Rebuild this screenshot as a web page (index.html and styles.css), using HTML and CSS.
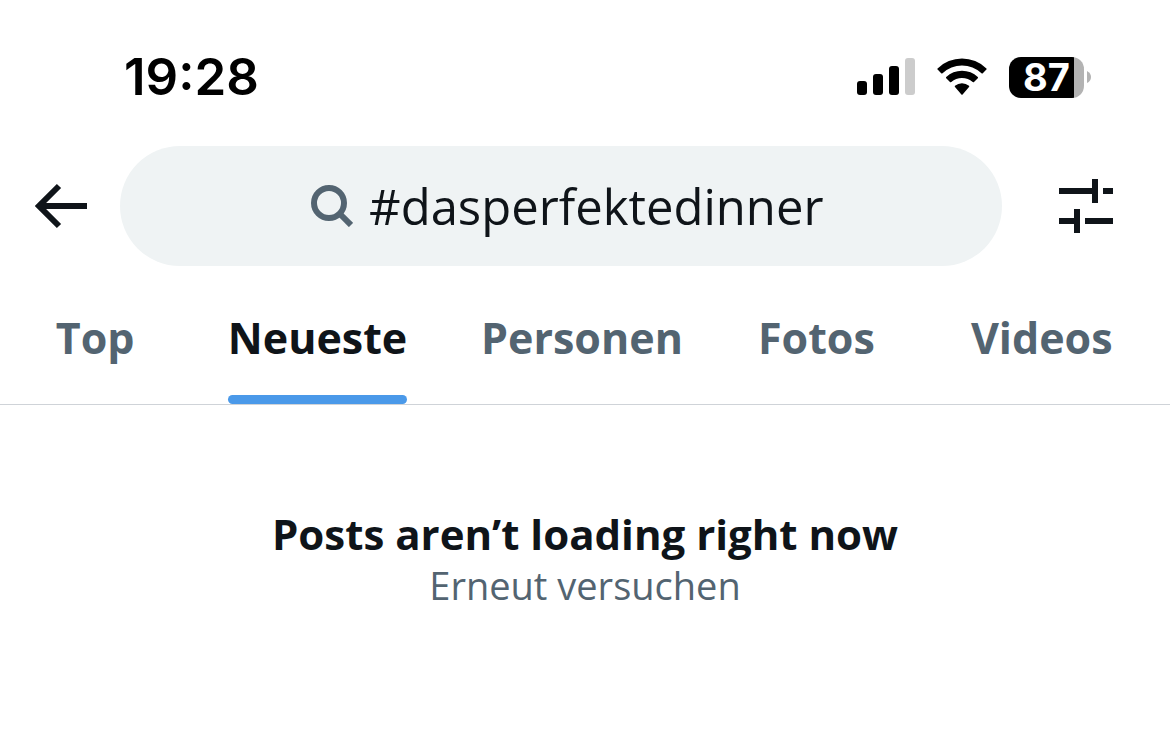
FILE: index.html
```html
<!DOCTYPE html>
<html lang="de">
<head>
<meta charset="utf-8">
<meta name="viewport" content="width=device-width, initial-scale=1">
<title>#dasperfektedinner</title>
<link rel="stylesheet" href="styles.css">
</head>
<body>
<header class="status">
  <time class="clock">19:28</time>
  <div class="indicators">
    <svg class="signal" width="58" height="38" viewBox="0 0 58 38" aria-hidden="true">
      <rect x="0" y="23" width="10" height="14" rx="3"/>
      <rect x="16" y="16" width="10" height="21" rx="3"/>
      <rect x="32" y="8" width="10" height="29" rx="3"/>
      <rect class="faint" x="48" y="0" width="10" height="37" rx="3"/>
    </svg>
    <svg class="wifi" width="50" height="38" viewBox="0 0 50 38" aria-hidden="true">
      <path d="M.6 10.400A35 35 0 0 1 49.400 10.400Q50 11 49.400 11.600L45.800 15.200Q45.200 15.800 44.500 15.200A28.500 28.500 0 0 0 5.500 15.200Q4.800 15.800 4.200 15.200L.6 11.600Q0 11 .6 10.400Z"/>
      <path d="M9.200 19A23 23 0 0 1 40.800 19Q41.400 19.600 40.800 20.200L37 24Q36.400 24.600 35.700 24A16 16 0 0 0 14.300 24Q13.600 24.600 13 24L9.200 20.200Q8.600 19.600 9.200 19Z"/>
      <path d="M18 27.700A11 11 0 0 1 32 27.700Q32.600 28.300 32 28.900L25.600 36.400Q25 37 24.400 36.400L18 28.900Q17.400 28.300 18 27.700Z"/>
    </svg>
    <div class="battery">
      <div class="cell">87</div>
      <svg width="4" height="12" viewBox="0 0 4 12" aria-hidden="true"><path d="M0 0Q4 2 4 6T0 12Z"/></svg>
    </div>
  </div>
</header>
<div class="toolbar">
  <button class="icon-button" type="button" aria-label="Zurück">
    <svg width="54" height="46" viewBox="0 0 54 46" aria-hidden="true"><path d="M26 3 6 23 26 43M6 23H54" fill="none" stroke="currentColor" stroke-width="6"/></svg>
  </button>
  <label class="search">
    <svg width="42" height="42" viewBox="0 0 42 42" aria-hidden="true"><circle cx="18" cy="18" r="15" fill="none" stroke="currentColor" stroke-width="6"/><path d="M28 28 40 40" stroke="currentColor" stroke-width="6"/></svg>
    <input class="query" type="text" aria-label="Suche" value="#dasperfektedinner">
  </label>
  <button class="icon-button" type="button" aria-label="Filter">
    <svg width="54" height="54" viewBox="0 0 54 54" aria-hidden="true"><path d="M0 9h33V0h6v24h-6v-9H0zM44 9h10v6H44zM0 39h15v-9h6v24h-6v-9H0zM26 39h28v6H26z" fill="currentColor"/></svg>
  </button>
</div>
<nav class="tabs">
  <a class="tab" href="#top">Top</a>
  <a class="tab active" href="#neueste" aria-current="page">Neueste</a>
  <a class="tab" href="#personen">Personen</a>
  <a class="tab" href="#fotos">Fotos</a>
  <a class="tab" href="#videos">Videos</a>
</nav>
<main class="empty">
  <h1 class="title">Posts aren’t loading right now</h1>
  <button class="retry" type="button">Erneut versuchen</button>
</main>
</body>
</html>
```
FILE: styles.css
```css
* {
  box-sizing: border-box;
}

body {
  margin: 0;
  background: #fff;
  color: #0f1419;
  font-family: "Open Sans", "Noto Sans", sans-serif;
}

button,
input {
  margin: 0;
  padding: 0;
  border: 0;
  background: none;
  color: inherit;
  font: inherit;
}

button {
  cursor: pointer;
}

svg {
  display: block;
  flex: none;
}

.status {
  display: flex;
  align-items: center;
  justify-content: space-between;
  padding: 46px 79px 38px 124px;
  color: #000;
}

.clock {
  font: 600 51px/62px Inter, sans-serif;
}

.indicators {
  display: flex;
  align-items: center;
  gap: 22px;
}

.signal .faint {
  fill: #ccc;
}

.battery {
  display: flex;
  align-items: center;
  gap: 3px;
  fill: #b3b3b3;
}

.cell {
  width: 75px;
  border-radius: 12px;
  background: linear-gradient(to right, #000 65px, #b3b3b3 65px);
  color: #fff;
  font: 700 38px/41px Inter, sans-serif;
  text-align: center;
}

.toolbar {
  display: flex;
  align-items: center;
}

.icon-button {
  flex: none;
  display: grid;
  place-items: center;
  width: 120px;
  height: 120px;
}

.toolbar .icon-button:last-child {
  width: 168px;
}

.search {
  flex: 1;
  display: flex;
  align-items: center;
  justify-content: center;
  gap: 16px;
  height: 120px;
  padding-left: 18px;
  border-radius: 60px;
  background: #eff3f4;
  color: #536471;
}

.query {
  width: 460px;
  color: #0f1419;
  font-size: 49px;
  line-height: 68px;
  outline: 0;
}

.tabs {
  display: grid;
  grid-template-columns: 190fr 254fr 274fr 194fr 256fr;
  justify-items: center;
  border-bottom: 1px solid #cfd3d8;
}

.tab {
  padding: 41px 0 27px;
  border-bottom: 9px solid transparent;
  color: #536471;
  font-size: 43px;
  font-weight: 700;
  line-height: 61px;
  text-decoration: none;
}

.tab.active {
  position: relative;
  color: #0f1419;
}

.tab.active::after {
  content: "";
  position: absolute;
  inset: auto 0 -9px;
  height: 9px;
  border-radius: 5px;
  background: #4a99e9;
}

.empty {
  display: flex;
  flex-direction: column;
  align-items: center;
  padding: 103px 24px;
}

.title {
  margin: 0;
  font-size: 42px;
  font-weight: 700;
  line-height: 52px;
  text-align: center;
}

.retry {
  color: #536471;
  font-size: 38px;
  line-height: 50px;
}
```
